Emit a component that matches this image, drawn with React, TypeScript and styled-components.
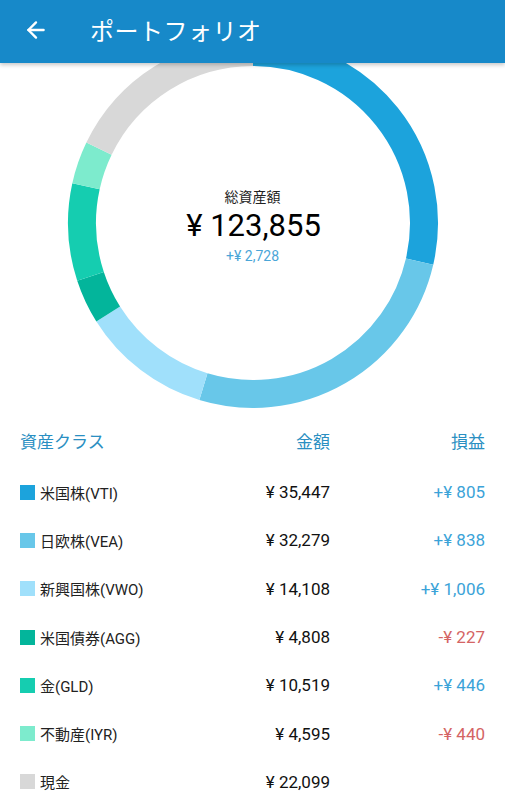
import React from 'react';
import styled, { createGlobalStyle } from 'styled-components';
import { ArrowLeft } from 'lucide-react';

const GlobalStyle = createGlobalStyle`
    body {
        margin: 0;
        background: #ffffff;
        font-family: Roboto, "Noto Sans CJK JP", sans-serif;
    }
`;

type Asset = { name: string; color: string; amount: number; profit?: number };

const ASSETS: Asset[] = [
    { name: '米国株(VTI)', color: '#1ca3dc', amount: 35447, profit: 805 },
    { name: '日欧株(VEA)', color: '#68c7e9', amount: 32279, profit: 838 },
    { name: '新興国株(VWO)', color: '#a0e0fb', amount: 14108, profit: 1006 },
    { name: '米国債券(AGG)', color: '#03b59b', amount: 4808, profit: -227 },
    { name: '金(GLD)', color: '#15cdb0', amount: 10519, profit: 446 },
    { name: '不動産(IYR)', color: '#7debcd', amount: 4595, profit: -440 },
    { name: '現金', color: '#d8d8d8', amount: 22099 },
];

const yen = (n: number) => n.toLocaleString('en-US');

const CX = 253;
const CY = 223;
const R = 171;
const STROKE = 28;

const arcPath = (start: number, end: number) => {
    const a0 = ((start - 90) * Math.PI) / 180;
    const a1 = ((end - 90) * Math.PI) / 180;
    const x0 = CX + R * Math.cos(a0);
    const y0 = CY + R * Math.sin(a0);
    const x1 = CX + R * Math.cos(a1);
    const y1 = CY + R * Math.sin(a1);
    const large = end - start > 180 ? 1 : 0;
    return `M ${x0} ${y0} A ${R} ${R} 0 ${large} 1 ${x1} ${y1}`;
};

const Donut: React.FC = () => {
    const total = ASSETS.reduce((s, a) => s + a.amount, 0);
    let acc = 0;
    return (
        <ChartSvg viewBox="0 63 505 350" width={505} height={350}>
            {ASSETS.map((a) => {
                const start = (acc / total) * 360;
                acc += a.amount;
                const end = (acc / total) * 360;
                return (
                    <path
                        key={a.name}
                        d={arcPath(start, end)}
                        stroke={a.color}
                        strokeWidth={STROKE}
                        fill="none"
                    />
                );
            })}
        </ChartSvg>
    );
};

export default function App() {
    return (
        <>
            <GlobalStyle />
            <Page>
                <AppBar>
                    <BackButton>
                        <ArrowLeft size={26} strokeWidth={2.2} color="#ffffff" />
                    </BackButton>
                    <Title>ポートフォリオ</Title>
                </AppBar>

                <ChartArea>
                    <Donut />
                    <Summary>
                        <SummaryLabel>総資産額</SummaryLabel>
                        <SummaryTotal>¥ 123,855</SummaryTotal>
                        <SummaryProfit>+¥ 2,728</SummaryProfit>
                    </Summary>
                </ChartArea>

                <Table>
                    <HeadRow>
                        <HeadCell>資産クラス</HeadCell>
                        <HeadCell $right>金額</HeadCell>
                        <HeadCell $right>損益</HeadCell>
                    </HeadRow>
                    {ASSETS.map((a) => (
                        <Row key={a.name}>
                            <NameCell>
                                <Swatch $color={a.color} />
                                {a.name}
                            </NameCell>
                            <Amount>¥ {yen(a.amount)}</Amount>
                            <Profit $loss={(a.profit ?? 0) < 0}>
                                {a.profit === undefined
                                    ? ''
                                    : `${a.profit < 0 ? '-' : '+'}¥ ${yen(Math.abs(a.profit))}`}
                            </Profit>
                        </Row>
                    ))}
                </Table>
            </Page>
        </>
    );
}

/* Styles */
const Page = styled.div`
    width: 505px;
    min-height: 800px;
    background: #ffffff;
    overflow: hidden;
`;
const AppBar = styled.header`
    position: relative;
    z-index: 2;
    display: flex;
    align-items: center;
    height: 63px;
    padding: 0 0 4px 23px;
    box-sizing: border-box;
    background: #1789c9;
    box-shadow: 0 2px 4px rgba(0, 0, 0, 0.22);
`;
const BackButton = styled.div`
    display: flex;
    align-items: center;
    width: 26px;
    height: 26px;
    margin-right: 41px;
`;
const Title = styled.h1`
    margin: 0;
    font-family: "Noto Sans CJK JP", sans-serif;
    font-size: 24px;
    font-weight: 400;
    color: #ffffff;
    letter-spacing: 0.5px;
`;
const ChartArea = styled.section`
    position: relative;
    height: 350px;
`;
const ChartSvg = styled.svg`
    display: block;
`;
const Summary = styled.div`
    position: absolute;
    left: 0;
    right: 0;
    top: 123px;
    display: flex;
    flex-direction: column;
    align-items: center;
`;
const SummaryLabel = styled.div`
    font-family: "Noto Sans CJK JP", sans-serif;
    font-size: 14px;
    color: #222222;
    line-height: 20px;
`;
const SummaryTotal = styled.div`
    font-family: Roboto, sans-serif;
    font-size: 31px;
    color: #000000;
    line-height: 40px;
    margin-left: 2px;
`;
const SummaryProfit = styled.div`
    font-family: Roboto, sans-serif;
    font-size: 14px;
    color: #4aa6d8;
    line-height: 20px;
`;
const Table = styled.section`
    padding: 0 20px;
`;
const HeadRow = styled.div`
    display: grid;
    grid-template-columns: 1fr 120px 155px;
    align-items: center;
    height: 55px;
`;
const HeadCell = styled.div<{ $right?: boolean }>`
    font-family: "Noto Sans CJK JP", sans-serif;
    font-size: 17px;
    color: #2a8fc2;
    text-align: ${(p) => (p.$right ? 'right' : 'left')};
`;
const Row = styled.div`
    display: grid;
    grid-template-columns: 1fr 120px 155px;
    align-items: center;
    height: 48.3px;
`;
const NameCell = styled.div`
    display: flex;
    align-items: center;
    font-family: Roboto, "Noto Sans CJK JP", sans-serif;
    font-size: 15px;
    color: #222222;
`;
const Swatch = styled.span<{ $color: string }>`
    width: 15px;
    height: 15px;
    margin-right: 5px;
    background: ${(p) => p.$color};
`;
const Amount = styled.div`
    font-size: 17px;
    color: #111111;
    text-align: right;
`;
const Profit = styled.div<{ $loss: boolean }>`
    font-size: 17px;
    color: ${(p) => (p.$loss ? '#d46464' : '#3ba3d8')};
    text-align: right;
`;
